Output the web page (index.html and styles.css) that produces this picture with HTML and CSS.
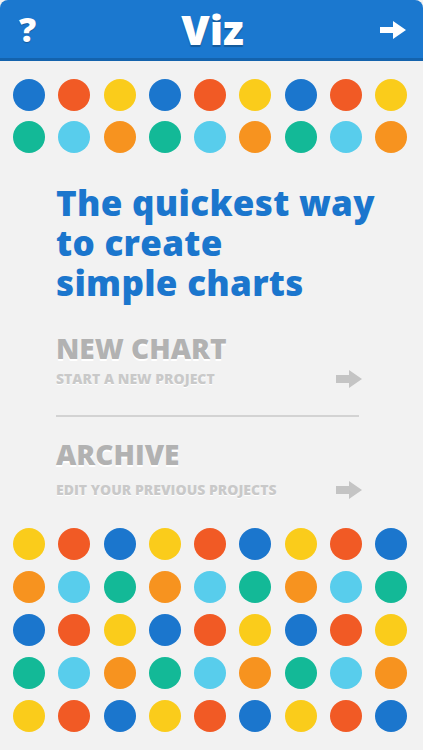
FILE: index.html
```html
<!DOCTYPE html>
<html>
<head>
<meta charset="utf-8">
<link rel="stylesheet" href="styles.css">
</head>
<body>
<div class="app">
  <header class="bar">
    <span class="bar-help">?</span>
    <span class="bar-title">Viz</span>
    <svg class="bar-next" width="26" height="18" viewBox="0 0 26 18"><path d="M0 6 H13 V0 L26 9 L13 18 V12 H0 Z" fill="#fff"/></svg>
  </header>

  <div class="dots top-dots">
    <div class="row"><i class="d b"></i><i class="d r"></i><i class="d y"></i><i class="d b"></i><i class="d r"></i><i class="d y"></i><i class="d b"></i><i class="d r"></i><i class="d y"></i></div>
    <div class="row"><i class="d t"></i><i class="d l"></i><i class="d o"></i><i class="d t"></i><i class="d l"></i><i class="d o"></i><i class="d t"></i><i class="d l"></i><i class="d o"></i></div>
  </div>

  <h1 class="headline">The quickest way<br>to create<br>simple charts</h1>

  <div class="menu">
    <div class="item">
      <div class="item-title">NEW CHART</div>
      <div class="item-row">
        <span class="item-sub">START A NEW PROJECT</span>
        <svg class="item-arrow" width="26" height="18" viewBox="0 0 26 18"><path d="M0 5 H13 V0 L26 9 L13 18 V13 H0 Z" fill="#c4c4c4"/></svg>
      </div>
    </div>
    <div class="divider"></div>
    <div class="item">
      <div class="item-title">ARCHIVE</div>
      <div class="item-row item-row-wide">
        <span class="item-sub">EDIT YOUR PREVIOUS PROJECTS</span>
        <svg class="item-arrow" width="26" height="18" viewBox="0 0 26 18"><path d="M0 5 H13 V0 L26 9 L13 18 V13 H0 Z" fill="#c4c4c4"/></svg>
      </div>
    </div>
  </div>

  <div class="dots bottom-dots">
    <div class="row"><i class="d y"></i><i class="d r"></i><i class="d b"></i><i class="d y"></i><i class="d r"></i><i class="d b"></i><i class="d y"></i><i class="d r"></i><i class="d b"></i></div>
    <div class="row"><i class="d o"></i><i class="d l"></i><i class="d t"></i><i class="d o"></i><i class="d l"></i><i class="d t"></i><i class="d o"></i><i class="d l"></i><i class="d t"></i></div>
    <div class="row"><i class="d b"></i><i class="d r"></i><i class="d y"></i><i class="d b"></i><i class="d r"></i><i class="d y"></i><i class="d b"></i><i class="d r"></i><i class="d y"></i></div>
    <div class="row"><i class="d t"></i><i class="d l"></i><i class="d o"></i><i class="d t"></i><i class="d l"></i><i class="d o"></i><i class="d t"></i><i class="d l"></i><i class="d o"></i></div>
    <div class="row"><i class="d y"></i><i class="d r"></i><i class="d b"></i><i class="d y"></i><i class="d r"></i><i class="d b"></i><i class="d y"></i><i class="d r"></i><i class="d b"></i></div>
  </div>
</div>
</body>
</html>
```

FILE: styles.css
```css
html, body {
  margin: 0;
  padding: 0;
  background: #f2f2f2;
}
body {
  font-family: "Open Sans", Lato, "Liberation Sans", sans-serif;
  width: 423px;
  height: 750px;
  overflow: hidden;
}
.app {
  display: flex;
  flex-direction: column;
}
.bar {
  height: 58px;
  background: #1b78cf;
  border-bottom: 3px solid #1463ad;
  border-radius: 8px 8px 0 0;
  display: flex;
  align-items: center;
  justify-content: space-between;
  padding: 0 17px 0 19px;
  color: #fff;
}
.bar-help {
  font-weight: 800;
  font-size: 34px;
  width: 26px;
  text-shadow: 0 1px 1px rgba(0,0,0,0.25);
}
.bar-title {
  font-weight: 800;
  font-size: 41px;
  text-shadow: 0 2px 1px rgba(0,0,0,0.25);
}
.bar-next {
  margin-top: 2px;
}
.dots {
  display: flex;
  flex-direction: column;
  padding-left: 13px;
}
.top-dots {
  padding-top: 18px;
  gap: 10px;
}
.bottom-dots {
  gap: 11px;
  margin-top: 29px;
}
.row {
  display: flex;
  gap: 13.3px;
}
.d {
  display: block;
  width: 32px;
  height: 32px;
  border-radius: 50%;
}
.b { background: #1b76cd; }
.r { background: #f15a25; }
.y { background: #facc1b; }
.t { background: #13b997; }
.l { background: #58cdec; }
.o { background: #f7931f; }
.headline {
  margin: 30px 0 0 56px;
  font-weight: 800;
  font-size: 35px;
  line-height: 40px;
  color: #1b76cd;
  letter-spacing: 0.3px;
}
.menu {
  margin: 29px 64px 0 56px;
  display: flex;
  flex-direction: column;
}
.item-title {
  font-weight: 800;
  font-size: 28px;
  line-height: 32px;
  color: #b2b2b2;
  text-shadow: 0 2px 0 #fff;
}
.item-row {
  display: flex;
  justify-content: space-between;
  align-items: center;
  margin-top: 5px;
}
.item-row-wide {
  margin-top: 10px;
}
.item-sub {
  font-weight: 800;
  font-size: 14px;
  color: #c9c9c9;
  text-shadow: 0 1px 0 #fff;
}
.item-arrow {
  margin-right: -3px;
}
.divider {
  height: 2px;
  background: #d3d3d3;
  margin: 27px 0 21px;
}
```
